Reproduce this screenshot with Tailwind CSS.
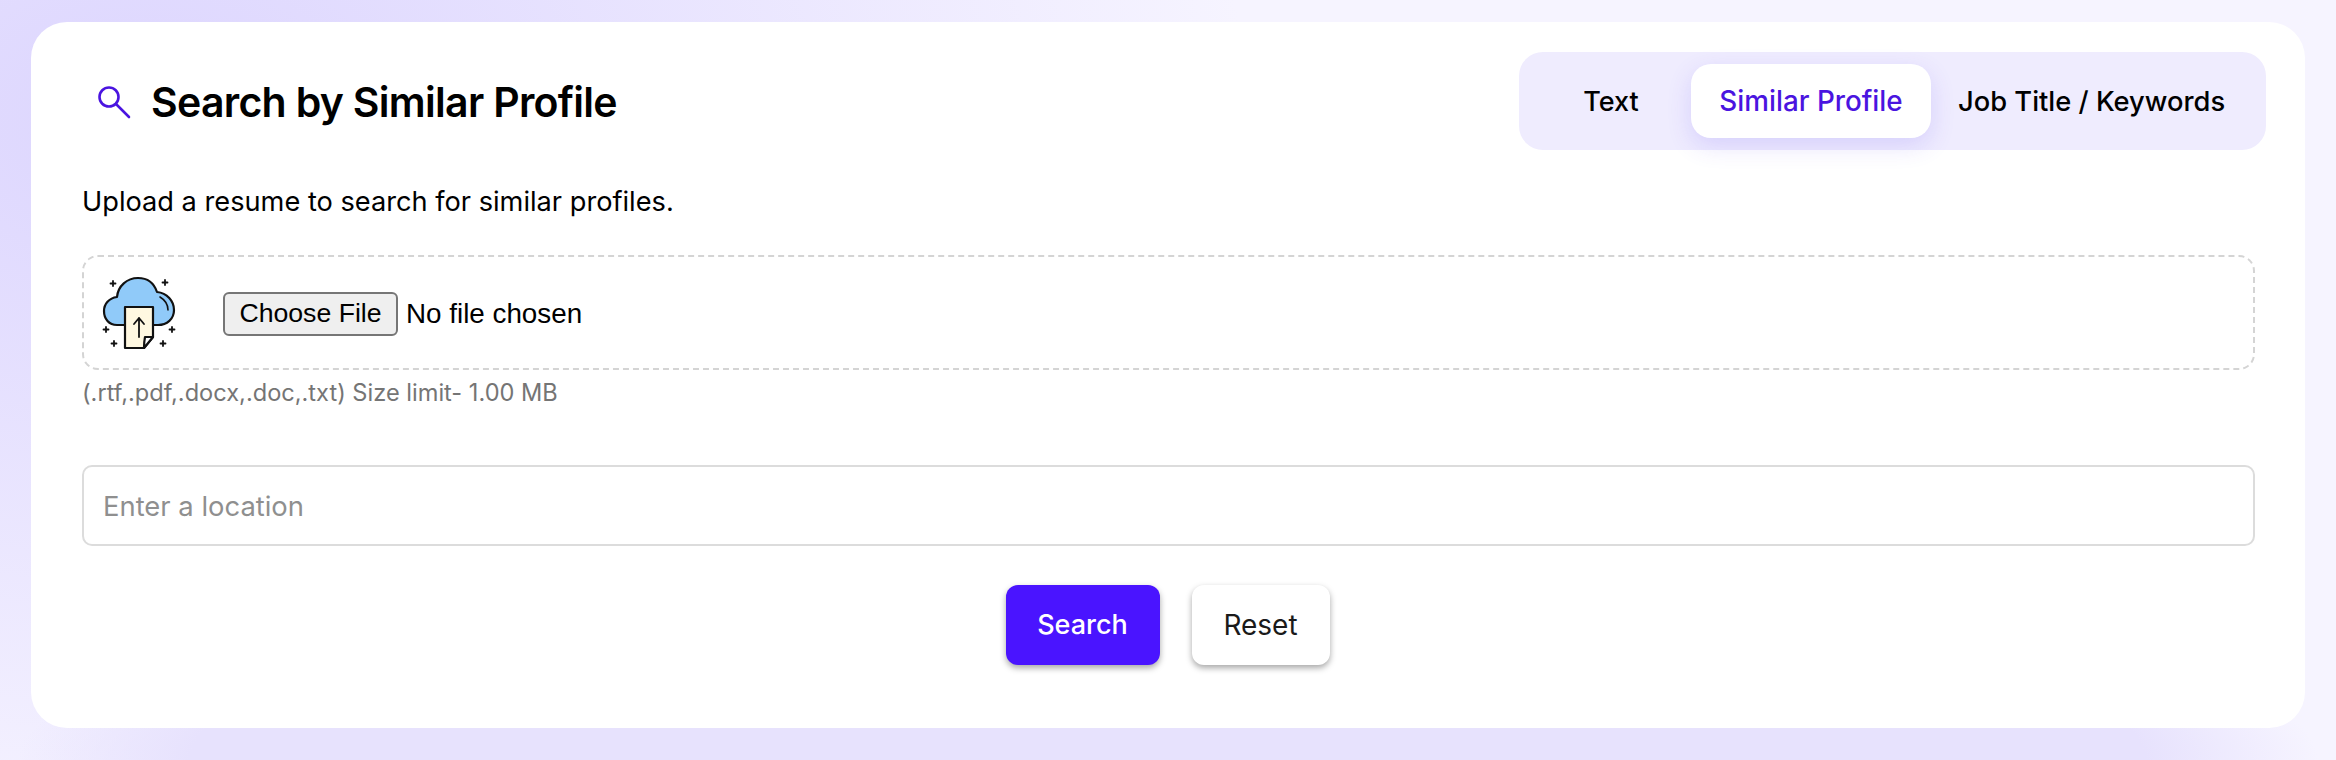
<!DOCTYPE html>
<html lang="en">
<head>
    <meta charset="UTF-8">
    <meta name="viewport" content="width=device-width, initial-scale=1.0">
    <title>Search by Similar Profile</title>
    <script src="https://cdn.jsdelivr.net/npm/@tailwindcss/browser@4"></script>
</head>
<body class="h-[760px] overflow-hidden font-['Inter',sans-serif] text-black bg-[#f6f4ff] bg-[radial-gradient(1150px_200px_at_50%_100%,#e7e2fd_85%,#e7e2fd00_100%),radial-gradient(1100px_760px_at_150px_120px,#dcd5fe_0%,#dcd5fe00_100%)]">
    <div class="ml-[31px] mr-[31px] mt-[22px] h-[706px] rounded-[36px] bg-white pl-[51px] pr-[50px] pt-[30px]">
        <div class="flex items-start justify-between">
            <div class="flex items-center pl-[15px] pt-[26px] gap-[20px]">
                <svg class="w-[34px] h-[34px] text-[#4a14e0]" viewBox="0 0 34 34" fill="none" stroke="currentColor" stroke-width="2.6" stroke-linecap="round">
                    <circle cx="12" cy="12" r="9.5"/>
                    <path d="M19 19 L32 32"/>
                </svg>
                <h1 class="text-[41px] leading-[48px] font-semibold tracking-[-0.7px]">Search by Similar Profile</h1>
            </div>
            <div class="flex items-center w-[747px] h-[98px] rounded-[24px] bg-[#efecfe] -mr-[11px] pl-[12px]">
                <button class="w-[160px] h-[74px] pt-[2px] text-[27px] font-medium">Text</button>
                <button class="w-[240px] h-[74px] pt-[2px] rounded-[20px] bg-white text-[27.8px] font-medium text-[#4a14e0] shadow-[0_8px_24px_rgba(90,60,240,0.16)]">Similar Profile</button>
                <button class="ml-[27px] h-[74px] pt-[2px] text-[27.3px] font-medium">Job Title / Keywords</button>
            </div>
        </div>
        <p class="mt-[34px] text-[27.2px] leading-[36px]">Upload a resume to search for similar profiles.</p>
        <div class="mt-[35px] flex items-center h-[115px] rounded-[16px] border-2 border-dashed border-[#d4d4d4] pl-[6px]">
            <svg class="w-[100px] h-[90px] shrink-0 mb-[6px]" viewBox="0 0 100 90" fill="none" stroke="#111" stroke-width="2.2" stroke-linejoin="round" stroke-linecap="round">
                <path d="M35 60 H27 C19 60 14 54 14 46 C14 39 19 33 27 32 C28 21 37 13 48 13 C57 13 64 18 67 27 C77 28 84 36 84 45 C84 54 77 60 68 60 H63" fill="#90caf9"/>
                <path d="M70 32 C75 35 78 40 78 45" stroke-width="1.6"/>
                <path d="M35 42 H63 V72 L54 83 H35 Z" fill="#fff8e1"/>
                <path d="M63 72 H55 C54 77 54 80 54 83 Z" fill="#fff"/>
                <path d="M49 72 V53 M44 59 L49 53 L54 59" stroke-width="1.8"/>
                <path d="M23 16 V21 M20.500 18.500 H25.500 M75 15 V20 M72.500 17.500 H77.500 M16 62 V67 M13.500 64.500 H18.500 M82 62 V67 M79.500 64.500 H84.500 M24 76 V81 M21.500 78.500 H26.500 M73 76 V81 M70.500 78.500 H75.500" stroke-width="1.8"/>
            </svg>
            <button class="ml-[33px] mt-[2px] h-[44px] w-[175px] rounded-[6px] border-2 border-[#767676] bg-[#efefef] font-['Liberation_Sans',sans-serif] text-[26.67px] leading-none">Choose File</button>
            <span class="ml-[8px] mt-[2px] font-['Liberation_Sans',sans-serif] text-[27.8px]">No file chosen</span>
        </div>
        <p class="mt-[8px] text-[23.6px] leading-[30px] text-[#757575]">(.rtf,.pdf,.docx,.doc,.txt) Size limit- 1.00 MB</p>
        <input type="text" placeholder="Enter a location" class="mt-[57px] block w-full h-[81px] rounded-[10px] border-2 border-[#dcdcdc] px-[19px] text-[27.4px] placeholder:text-[#8f8f8f]" />
        <div class="mt-[39px] flex justify-center gap-[32px] pr-[2px]">
            <button class="w-[154px] h-[80px] rounded-[12px] bg-[#4a14ff] text-white text-[27px] font-medium shadow-[0_3px_6px_rgba(0,0,0,0.35)]">Search</button>
            <button class="w-[138px] h-[80px] rounded-[12px] bg-white text-[#1a1a1a] text-[28px] shadow-[0_3px_6px_rgba(0,0,0,0.35)]">Reset</button>
        </div>
    </div>
</body>
</html>
